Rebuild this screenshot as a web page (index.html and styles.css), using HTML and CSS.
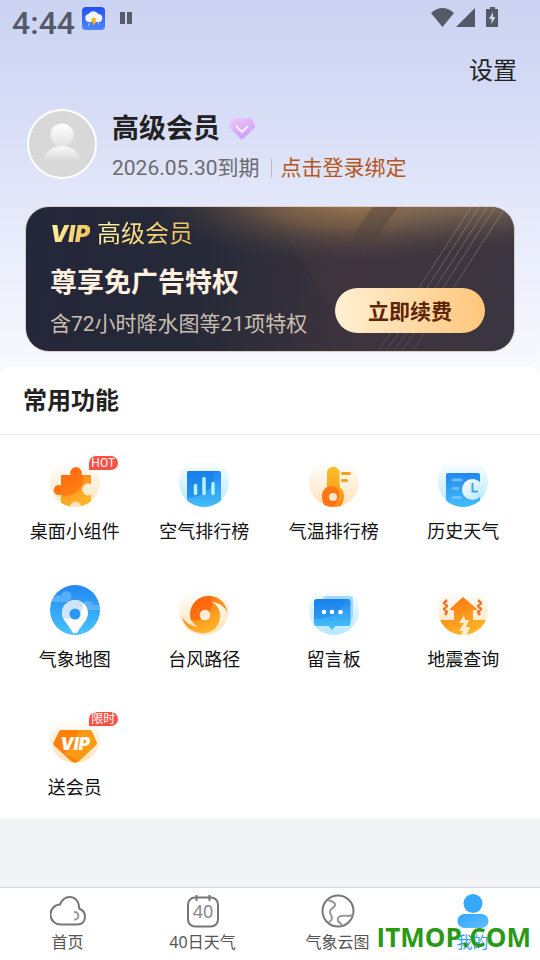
FILE: index.html
```html
<!DOCTYPE html>
<html lang="zh-CN">
<head>
    <meta charset="UTF-8">
    <meta name="viewport" content="width=device-width, initial-scale=1.0">
    <title>我的</title>
    <link rel="stylesheet" href="styles.css">
</head>
<body>
    <!-- shared gradients -->
    <svg class="defs" width="0" height="0" aria-hidden="true">
        <defs>
            <linearGradient id="haloOrange" x1="0" y1="0" x2="0" y2="1"><stop offset=".1" stop-color="#fff"/><stop offset="1" stop-color="#ffe2b8"/></linearGradient>
            <linearGradient id="haloBlue" x1="0" y1="0" x2="0" y2="1"><stop offset=".05" stop-color="#fff"/><stop offset="1" stop-color="#b5e8ff"/></linearGradient>
            <linearGradient id="orange" x1="0" y1="0" x2=".5" y2="1"><stop offset="0" stop-color="#ff6a0c"/><stop offset="1" stop-color="#ffb428"/></linearGradient>
            <linearGradient id="orangeUp" x1="0" y1="0" x2="0" y2="1"><stop offset="0" stop-color="#ffc028"/><stop offset="1" stop-color="#ff8a18"/></linearGradient>
            <linearGradient id="blue" x1="0" y1="0" x2="0" y2="1"><stop offset="0" stop-color="#2187f2"/><stop offset="1" stop-color="#48c4fb"/></linearGradient>
            <clipPath id="round"><circle cx="25" cy="25" r="25"/></clipPath>
        </defs>
    </svg>

    <header>
        <div class="status">
            <span class="time">4:44</span>
            <svg class="app" width="23" height="23" viewBox="0 0 23 23">
                <defs><linearGradient id="appBg" x1="0" y1="0" x2="0" y2="1"><stop offset="0" stop-color="#2350fb"/><stop offset="1" stop-color="#4b87ff"/></linearGradient></defs>
                <rect width="23" height="23" rx="4" fill="url(#appBg)"/>
                <path d="M7 15a4 4 0 0 1-.5-7.900A5.500 5.500 0 0 1 16 7a4 4 0 0 1 .5 8z" fill="#f4f6fc"/>
                <path d="M10 11h4l-.5 3.500h1L11 19v-3.500H9z" fill="#ffb21c"/>
                <path d="M7.500 16l-1 3M16 15.500l1 2" stroke="#bfe0ff" stroke-width="1"/>
            </svg>
            <svg class="pause" width="12" height="12" viewBox="0 0 12 12"><path d="M0 0h5v12H0zM7 0h5v12H7z" fill="#585c6b"/></svg>
            <svg class="signals" width="68" height="21" viewBox="0 0 68 21" fill="#555a68">
                <path d="M0 6Q11.500-4 23 6L11.500 20z"/>
                <path d="M44 1v19H25z"/>
                <path fill-rule="evenodd" d="M59 0h5v2h3v18H55V2h4zM62 5l-4 7h2.500v5l4-7H62z"/>
            </svg>
        </div>
        <div class="settings"><a href="#settings">设置</a></div>

        <div class="profile">
            <svg class="avatar" width="70" height="70" viewBox="0 0 70 70">
                <defs>
                    <linearGradient id="head" x1="0" y1="0" x2="0" y2="1"><stop offset="0" stop-color="#fff"/><stop offset="1" stop-color="#e2e2e2"/></linearGradient>
                    <linearGradient id="bust" x1="0" y1="0" x2="0" y2="1"><stop offset="0" stop-color="#fafafa"/><stop offset="1" stop-color="#d8d8d8"/></linearGradient>
                </defs>
                <circle cx="35" cy="35" r="34" fill="#d8d8d8" stroke="#fff" stroke-width="2"/>
                <circle cx="35" cy="26" r="11.500" fill="url(#head)"/>
                <path d="M16 52c3-10 10-15 19-15s16 5 19 15z" fill="url(#bust)"/>
            </svg>
            <div>
                <h1>高级会员
                    <svg width="26" height="23" viewBox="0 0 26 23">
                        <defs><linearGradient id="gem" x1="0" y1="0" x2=".6" y2="1"><stop offset="0" stop-color="#f0c8f8"/><stop offset="1" stop-color="#cc9dfc"/></linearGradient></defs>
                        <path d="M5 0h16q1.500 0 2.200 1.200L26 8q.3 1-.5 2L14 21q-1 .8-2 0L.7 10q-1-1-.5-2L3 1Q3.600 0 5 0z" fill="url(#gem)"/>
                        <path d="M7.500 8.500l5.500 5.500 5.500-5.500" fill="none" stroke="#fbeeff" stroke-width="2" stroke-linecap="round" stroke-linejoin="round"/>
                    </svg>
                </h1>
                <p class="expire"><span>2026.05.30到期</span><a href="#login">点击登录绑定</a></p>
            </div>
        </div>

        <section class="card">
            <svg class="shine" viewBox="0 0 490 146" preserveAspectRatio="none">
                <defs>
                    <radialGradient id="glow" cx="330" cy="-12" r="1" gradientUnits="userSpaceOnUse" gradientTransform="translate(330 -12) scale(220 72) translate(-330 12)"><stop offset="0" stop-color="#b08351"/><stop offset=".45" stop-color="#8a6b4c" stop-opacity=".65"/><stop offset="1" stop-color="#3c3740" stop-opacity="0"/></radialGradient>
                    <linearGradient id="side" x1="0" y1="0" x2="0" y2="1"><stop offset="0" stop-color="#85705a" stop-opacity=".7"/><stop offset="1" stop-color="#3c3740" stop-opacity="0"/></linearGradient>
                    <linearGradient id="fade" x1="0" y1="0" x2="0" y2="1"><stop offset="0" stop-color="#a8916f" stop-opacity=".6"/><stop offset="1" stop-color="#77707c" stop-opacity=".35"/></linearGradient>
                </defs>
                <path d="M243 0h247v146H333z" fill="#573e3b" fill-opacity=".18"/>
                <rect width="490" height="146" fill="url(#glow)"/>
                <path d="M380 0h110v48H350z" fill="url(#side)"/>
                <path d="M348 0l-20 30 13 18 32-48z" fill="#4c403f" fill-opacity=".4"/>
                <path d="M447 0l-93 146M455 0l-93 146M463 0l-93 146M471 0l-93 146M479 4l-91 142" stroke="url(#fade)" fill="none"/>
            </svg>
            <div class="perks">
                <p class="level"><b class="vip">VIP</b> <span>高级会员</span></p>
                <h2>尊享免广告特权</h2>
                <p class="desc">含72小时降水图等21项特权</p>
            </div>
            <button type="button" class="renew">立即续费</button>
        </section>
    </header>

    <main>
        <h2>常用功能</h2>
        <div class="grid">
            <a href="#widget">
                <svg width="50" height="50" viewBox="0 0 50 50">
                    <circle cx="25" cy="25" r="25" fill="url(#haloOrange)"/>
                    <g clip-path="url(#round)">
                        <path d="M12 18h8.500a5.800 5.800 0 1 1 11 0H40q1 0 1 1v8.500a5.800 5.800 0 1 0 0 10V50H31a5.500 5.500 0 0 0-11 0h-9V37.500a5 5 0 1 1 0-9V19q0-1 1-1z" fill="url(#orange)"/>
                        <path d="M11 19q0-1 1-1h8.500a5.800 5.800 0 1 1 11 0H33c2 12-8 21-18 21l-4-1.500a5 5 0 1 1 0-9z" fill="#ff5d08" fill-opacity=".5"/>
                    </g>
                </svg>
                <span>桌面小组件</span>
                <em class="badge">HOT</em>
            </a>
            <a href="#air">
                <svg width="50" height="50" viewBox="0 0 50 50">
                    <circle cx="25" cy="25" r="25" fill="url(#haloBlue)"/>
                    <g clip-path="url(#round)">
                        <rect x="8" y="14" width="34" height="40" rx="2" fill="url(#blue)"/>
                        <path d="M8 14h27c2 14-7 26-27 27z" fill="#0c74ea" fill-opacity=".45"/>
                    </g>
                    <path d="M16.500 28.500v8M25 21.500v15M34 26.500v10" stroke="#b4f4ff" stroke-width="3.500" stroke-linecap="round"/>
                </svg>
                <span>空气排行榜</span>
            </a>
            <a href="#temperature">
                <svg width="50" height="50" viewBox="0 0 50 50">
                    <circle cx="25" cy="25" r="25" fill="url(#haloOrange)"/>
                    <g clip-path="url(#round)">
                        <path d="M18 16a6.300 6.300 0 0 1 12.600 0v14a11 11 0 0 1 4.400 9q0 7-4 11H17q-4-4-4-11a11 11 0 0 1 5-9z" fill="url(#orangeUp)"/>
                        <path d="M18 30c6-3 13 1 12 8s-4 10-8 12h-5q-4-4-4-11a11 11 0 0 1 5-9z" fill="#ff6610" fill-opacity=".65"/>
                    </g>
                    <circle cx="24" cy="40" r="4" fill="#ffe9cc"/>
                    <path d="M33.500 16.500h7M33.500 23.500h4" stroke="#ff9d20" stroke-width="3" stroke-linecap="round"/>
                </svg>
                <span>气温排行榜</span>
            </a>
            <a href="#history">
                <svg width="50" height="50" viewBox="0 0 50 50">
                    <defs><linearGradient id="clock" x1="0" y1="0" x2="1" y2="1"><stop offset="0" stop-color="#fff"/><stop offset="1" stop-color="#b5e7ff"/></linearGradient></defs>
                    <circle cx="25" cy="25" r="25" fill="url(#haloBlue)"/>
                    <rect x="8" y="16" width="34" height="38" rx="2" fill="url(#blue)" clip-path="url(#round)"/>
                    <path d="M15 23h8M15 31.500h5M15 40.500h8" stroke="#69bfff" stroke-width="3" stroke-linecap="round"/>
                    <circle cx="34.500" cy="32.500" r="10.500" fill="url(#clock)"/>
                    <path d="M34.500 26v8.500H40" stroke="#41a5f4" stroke-width="2" fill="none"/>
                </svg>
                <span>历史天气</span>
            </a>
            <a href="#map">
                <svg width="50" height="50" viewBox="0 0 50 50">
                    <circle cx="25" cy="25" r="25" fill="url(#blue)"/>
                    <g clip-path="url(#round)" fill="#69b7f9" fill-opacity=".75">
                        <path d="M0 17v-4h4a5 5 0 0 1 7-2 5.300 5.300 0 1 1 8 5q-1 1-3 1z"/>
                        <path d="M50 25V20h-7a5.300 5.300 0 0 0-10-1l-4 6z"/>
                    </g>
                    <path d="M25 48.500q-2 0-3-2C18 39 12 35 12 28a13 13 0 0 1 26 0c0 7-6 11-10 18.500q-1 2-3 2z" fill="#fff"/>
                    <path d="M12 28a13 13 0 0 1 21-10c1 10-8 18-20 15q-1-2-1-5z" fill="#cfe4fb"/>
                    <circle cx="25" cy="29" r="5.500" fill="#2a98f3"/>
                </svg>
                <span>气象地图</span>
            </a>
            <a href="#typhoon">
                <svg width="50" height="50" viewBox="0 0 50 50">
                    <circle cx="25" cy="25" r="25" fill="url(#haloOrange)"/>
                    <path d="M11 30c0-11 8-19 19-19 10 0 17 7 19 17-3-6-8-10-16-11 5 3 8 8 8 13 0 11-7 18-17 18C13 48 5 41 3 32c4 6 9 9 16 10-5-3-8-7-8-12z" fill="url(#orange)"/>
                    <path d="M11 30c0-11 8-19 19-19h2c4 14-6 26-20 24z" fill="#ff580c" fill-opacity=".6"/>
                    <circle cx="26" cy="30" r="5.300" fill="#ffedd8"/>
                </svg>
                <span>台风路径</span>
            </a>
            <a href="#message">
                <svg width="50" height="50" viewBox="0 0 50 50">
                    <circle cx="25" cy="25" r="25" fill="url(#haloBlue)"/>
                    <rect x="14" y="11" width="30" height="24" rx="3" fill="#a4d8fb"/>
                    <path d="M8 14h31q2.500 0 2.500 2.500v22Q41.500 41 39 41H26.500L23 45l-3.500-4H8q-3 0-3-2.500v-22Q5 14 8 14z" fill="url(#blue)"/>
                    <path d="M8 14h28c-1 13-13 20-31 20V16.500Q5 14 8 14z" fill="#147be9" fill-opacity=".4"/>
                    <g fill="#fff"><circle cx="15" cy="27" r="2.300"/><circle cx="23" cy="27" r="2.300"/><circle cx="31.500" cy="27" r="2.300"/></g>
                </svg>
                <span>留言板</span>
            </a>
            <a href="#quake">
                <svg width="50" height="50" viewBox="0 0 50 50">
                    <circle cx="25" cy="25" r="25" fill="url(#haloOrange)"/>
                    <path d="M25 12l14 12q1 1-1 1h-3v10h15v15H0V35h16V25h-3q-2 0-1-1z" fill="url(#orange)" clip-path="url(#round)"/>
                    <path d="M26 30l-5 8h5l-5 8h4l-2 4h6l3-8h-4l3-7h-4z" fill="#ffedce"/>
                    <path d="M9 15l-3 3 3 3-3 3 3 3-2 3M40 15l3 3-3 3 3 3-3 3 2 3" stroke="#fb7320" stroke-width="2.500" fill="none" stroke-linejoin="round"/>
                </svg>
                <span>地震查询</span>
            </a>
            <a href="#gift">
                <svg width="50" height="50" viewBox="0 0 50 50">
                    <circle cx="25" cy="25" r="25" fill="url(#haloOrange)"/>
                    <path d="M11 17h28q2 0 3 2l4.500 10q.5 1.500-.5 3L29 48q-4 3.500-8 0L4 32.500q-1-1.500-.5-3L9 18.500q.5-1.500 2-1.500z" fill="#ff8208"/>
                    <path d="M28 17h11q2 0 3 2l4.500 10q.5 1.500-.5 3L29 48 14 40c9-4 14-12 14-23z" fill="#ff9a12"/>
                    <text class="gift-vip" x="25" y="37" text-anchor="middle">VIP</text>
                </svg>
                <span>送会员</span>
                <em class="badge">限时</em>
            </a>
        </div>
    </main>

    <nav>
        <a href="#home">
            <svg width="36" height="36" viewBox="0 0 36 36" fill="none" stroke="#777" stroke-width="2">
                <path d="M11 31.500a10 10 0 0 1-1-20C12 7 15 4 19.500 4 25 4 29 8 29 14.500q0 1 1 1.500c3 1.500 5 4 5 7.500 0 5-3 8-8 8z"/>
                <path d="M24 19a3.800 3.800 0 1 1 0 7.500" stroke="#999"/>
            </svg>
            <span>首页</span>
        </a>
        <a href="#forty">
            <svg width="36" height="36" viewBox="0 0 36 36" fill="none" stroke="#777" stroke-width="2">
                <rect x="3" y="4.500" width="30" height="29" rx="7"/>
                <path d="M11.500 2v6M24.500 2v6"/>
                <text class="forty" x="18" y="25" text-anchor="middle">40</text>
            </svg>
            <span>40日天气</span>
        </a>
        <a href="#cloud">
            <svg width="36" height="36" viewBox="0 0 36 36" fill="none" stroke="#777" stroke-width="2">
                <circle cx="18" cy="18" r="15.500"/>
                <path d="M8 7c2 1 6 1 7 4s-4 4-5 7 2 4 2 7-2 3-3 4M33 22c-4 2-8 0-12 1s-4 4-2 6 3 2 3 4" stroke="#999"/>
            </svg>
            <span>气象云图</span>
        </a>
        <a href="#me" class="active">
            <svg width="36" height="36" viewBox="0 0 36 36">
                <defs><linearGradient id="me" x1="0" y1="0" x2="1" y2="1"><stop offset="0" stop-color="#2fa5ff"/><stop offset="1" stop-color="#62bfff"/></linearGradient></defs>
                <circle cx="18" cy="10.500" r="9.500" fill="#35a8ff"/>
                <rect x="2.500" y="21" width="31" height="14" rx="7" fill="url(#me)"/>
            </svg>
            <span>我的</span>
        </a>
        <strong class="watermark">ITMOP.COM</strong>
    </nav>
</body>
</html>
```
FILE: styles.css
```css
* { box-sizing: border-box; }
body {
    margin: 0;
    min-height: 100vh;
    display: flex;
    flex-direction: column;
    background: #f1f3f5;
    font-family: Roboto, "Noto Sans CJK SC", sans-serif;
    color: #222;
}
h1, h2, p { margin: 0; }
a { color: inherit; text-decoration: none; }
svg { display: block; flex: none; }
.defs { position: absolute; }

header {
    padding: 0 25px 26px;
    background: linear-gradient(#cbd3f2, #d6dcf6 28%, #e4e8fa 55%, #fafbff);
}
.status {
    display: flex;
    align-items: flex-start;
    height: 45px;
    margin: 0 -13px;
}
.time {
    width: 63px;
    font: 500 32px/46px Roboto, sans-serif;
    color: #555a68;
}
.app { margin: 7px 15px 0 7px; }
.pause { margin-top: 12px; }
.signals { margin: 7px 29px 0 auto; }
.settings {
    margin-right: -2px;
    text-align: right;
    font-size: 24px;
    line-height: 52px;
}

.profile {
    display: flex;
    gap: 15px;
    padding: 12px 2px 0;
}
.profile h1 {
    display: flex;
    align-items: center;
    gap: 9px;
    font-size: 27px;
    line-height: 40px;
}
.expire {
    display: flex;
    align-items: center;
    margin-top: 3px;
    font-size: 21px;
    line-height: 32px;
    color: #6b6b70;
}
.expire a {
    padding-left: 10px;
    color: #b5561b;
    background: linear-gradient(#b9bccb, #b9bccb) left center / 1px 20px no-repeat;
}
.expire span { margin-right: 11px; }

.card {
    position: relative;
    display: flex;
    align-items: flex-end;
    justify-content: space-between;
    margin-top: 22px;
    padding: 12px 29px 12px 24px;
    border: 1px solid #d9cdc6;
    border-radius: 24px;
    overflow: hidden;
    background: linear-gradient(100deg, #24263a 0%, #252937 35%, #3b333d 65%, #333442 100%);
    white-space: nowrap;
}
.shine {
    position: absolute;
    inset: 0;
    width: 100%;
    height: 100%;
}
.perks, .renew { position: relative; }
.level {
    display: flex;
    align-items: center;
    gap: 7px;
    font-size: 24px;
    line-height: 30px;
}
.level span, .vip {
    color: transparent;
    background: linear-gradient(110deg, #fff6a8, #f0bc50);
    background-clip: text;
    -webkit-background-clip: text;
}
.vip {
    font: italic 900 23px/30px Inter, sans-serif;
}
.card h2 {
    margin-top: 16px;
    font-size: 27px;
    line-height: 36px;
    color: #fff0df;
}
.desc {
    margin-top: 8px;
    font-size: 21px;
    line-height: 30px;
    color: #c9bfb0;
}
.renew {
    width: 150px;
    height: 45px;
    margin-bottom: 6px;
    padding: 0 0 2px;
    border: none;
    border-radius: 23px;
    background: linear-gradient(90deg, #fff0d4, #ffc67a);
    color: #5c2408;
    font: bold 21px Roboto, "Noto Sans CJK SC", sans-serif;
    cursor: pointer;
}

main {
    margin-top: -12px;
    border-radius: 12px 12px 0 0;
    background: #fff;
}
main h2 {
    padding: 2px 0 0 23px;
    border-bottom: 1px solid #e8e8e8;
    font-size: 24px;
    line-height: 66px;
}
.grid {
    display: grid;
    grid-template-columns: repeat(4, 1fr);
    padding: 0 12px 0 10px;
}
.grid a {
    position: relative;
    display: flex;
    flex-direction: column;
    align-items: center;
    height: 128px;
    padding-top: 22px;
    font-size: 18px;
    line-height: 26px;
    color: #111;
}
.grid span { margin-top: 12px; }
.badge {
    position: absolute;
    top: 21px;
    left: calc(50% + 14px);
    width: 29px;
    border-radius: 7px 7px 7px 0;
    background: #fd5045;
    color: #fff;
    font: 12px/14px Roboto, "Noto Sans CJK SC", sans-serif;
    text-align: center;
}
.gift-vip {
    font: italic 900 17px Inter, sans-serif;
    fill: #fff;
}

nav {
    position: relative;
    display: flex;
    margin-top: auto;
    border-top: 1px solid #d9d9d9;
    background: #fff;
    font-family: "Noto Sans", "Noto Sans CJK SC", sans-serif;
    font-size: 16px;
    line-height: 20px;
    color: #555;
}
nav a {
    flex: 1;
    display: flex;
    flex-direction: column;
    align-items: center;
    gap: 3px;
    padding: 5px 0 8px;
}
nav .active { color: #35a0f8; }
.forty {
    font: 18px "Noto Sans", sans-serif;
    fill: #888;
    stroke: none;
}
.watermark {
    position: absolute;
    right: 9px;
    bottom: 5px;
    font: bold 26px/36px "Open Sans", sans-serif;
    color: #2a9a16;
    pointer-events: none;
}
```
